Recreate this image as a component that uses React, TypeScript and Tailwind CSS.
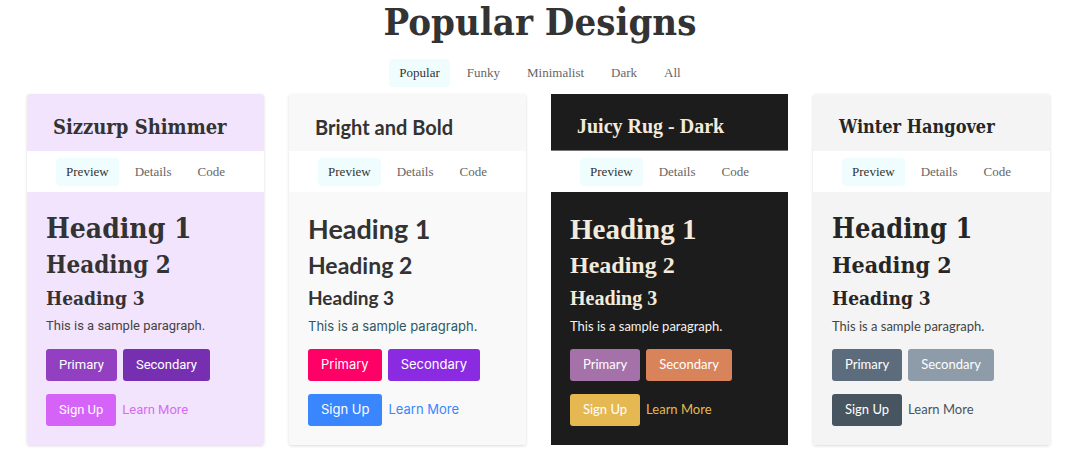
import React from "react";

type Theme = {
  name: string;
  headerBg: string;
  bodyBg: string;
  headerBorder: string;
  cardExtra: string;
  titleFont: string;
  headingFont: string;
  bodyFont: string;
  titleColor: string;
  headingColor: string;
  paraColor: string;
  primary: string;
  secondary: string;
  signUp: string;
  link: string;
  titleSize: string;
  h1: string;
  h2: string;
  h3: string;
};

const slab = "font-['DejaVu_Serif_Condensed','DejaVu_Serif',serif]";

const themes: Theme[] = [
  {
    name: "Sizzurp Shimmer",
    headerBg: "bg-[#f3e4fd]",
    bodyBg: "bg-[#f3e4fd]",
    headerBorder: "",
    cardExtra: "rounded-[3px] shadow-[0_1px_3px_rgba(0,0,0,0.15)]",
    titleFont: `${slab} font-bold`,
    headingFont: `${slab} font-bold`,
    bodyFont: "font-['Roboto',sans-serif]",
    titleColor: "text-[#333]",
    headingColor: "text-[#333]",
    paraColor: "text-[#444]",
    primary: "bg-[#9240c1]",
    secondary: "bg-[#772fb2]",
    signUp: "bg-[#d663f8]",
    link: "text-[#d36df4]",
    titleSize: "text-[20px]",
    h1: "text-[28px]",
    h2: "text-[24px]",
    h3: "text-[19px]",
  },
  {
    name: "Bright and Bold",
    headerBg: "bg-[#f8f8f8]",
    bodyBg: "bg-[#f9f9f9]",
    headerBorder: "",
    cardExtra: "rounded-[3px] shadow-[0_1px_3px_rgba(0,0,0,0.15)]",
    titleFont: "font-['Lato',sans-serif] font-bold",
    headingFont: "font-['Lato',sans-serif] font-bold",
    bodyFont: "font-['Inter',sans-serif]",
    titleColor: "text-[#333]",
    headingColor: "text-[#333]",
    paraColor: "text-[#2f5866]",
    primary: "bg-[#ff0066]",
    secondary: "bg-[#8a2be2]",
    signUp: "bg-[#3a86ff]",
    link: "text-[#3a86ff]",
    titleSize: "text-[20px]",
    h1: "text-[27px]",
    h2: "text-[23px]",
    h3: "text-[19px]",
  },
  {
    name: "Juicy Rug - Dark",
    headerBg: "bg-[#1c1c1c]",
    bodyBg: "bg-[#1c1c1c]",
    headerBorder: "border-b border-[#777]",
    cardExtra: "",
    titleFont: "font-['Liberation_Serif',serif] font-bold",
    headingFont: "font-['Liberation_Serif',serif] font-bold",
    bodyFont: "font-['Lato',sans-serif]",
    titleColor: "text-[#f3eadb]",
    headingColor: "text-[#f3eadb]",
    paraColor: "text-[#f2f2f2]",
    primary: "bg-[#a472a9]",
    secondary: "bg-[#d9835b]",
    signUp: "bg-[#e6b851]",
    link: "text-[#e6b851]",
    titleSize: "text-[20px]",
    h1: "text-[29px]",
    h2: "text-[24px]",
    h3: "text-[20px]",
  },
  {
    name: "Winter Hangover",
    headerBg: "bg-[#f4f4f4]",
    bodyBg: "bg-[#f4f4f4]",
    headerBorder: "",
    cardExtra: "rounded-[3px] shadow-[0_1px_3px_rgba(0,0,0,0.15)]",
    titleFont: `${slab} font-bold`,
    headingFont: `${slab} font-bold`,
    bodyFont: "font-['Lato',sans-serif]",
    titleColor: "text-[#262626]",
    headingColor: "text-[#262626]",
    paraColor: "text-[#444]",
    primary: "bg-[#5d6c7c]",
    secondary: "bg-[#8d9ca8]",
    signUp: "bg-[#46555f]",
    link: "text-[#46555f]",
    titleSize: "text-[18px]",
    h1: "text-[27px]",
    h2: "text-[23px]",
    h3: "text-[19px]",
  },
];

const pillFont = "font-['Liberation_Serif',serif] text-[13px]";

const Pill: React.FC<{ label: string; active?: boolean }> = ({ label, active }) => (
  <button
    className={`h-7 px-2.5 rounded-[4px] ${pillFont} ${
      active ? "bg-[#effdff] text-[#333]" : "text-[#666]"
    }`}
  >
    {label}
  </button>
);

const DesignCard: React.FC<{ theme: Theme }> = ({ theme: t }) => (
  <div className={`flex flex-col overflow-hidden ${t.cardExtra}`}>
    <div className={`h-[57px] flex items-center pl-[26px] pt-[8px] ${t.headerBg} ${t.headerBorder}`}>
      <h2 className={`${t.titleFont} ${t.titleSize} ${t.titleColor}`}>{t.name}</h2>
    </div>
    <div className="h-[41px] bg-white flex items-center justify-center gap-1.5">
      <Pill label="Preview" active />
      <Pill label="Details" />
      <Pill label="Code" />
    </div>
    <div className={`flex-1 px-[19px] pt-[19px] ${t.bodyBg}`}>
      <div className={`${t.headingFont} ${t.headingColor}`}>
        <h1 className={`${t.h1} leading-[36px]`}>Heading 1</h1>
        <h2 className={`${t.h2} leading-[36px]`}>Heading 2</h2>
        <h3 className={`${t.h3} leading-[30px]`}>Heading 3</h3>
      </div>
      <p className={`${t.bodyFont} ${t.paraColor} text-[13px] leading-[26px]`}>
        This is a sample paragraph.
      </p>
      <div className={`${t.bodyFont} text-[13px] mt-[10px] flex gap-1.5`}>
        <button className={`h-8 px-[13px] rounded-[3px] text-white ${t.primary}`}>Primary</button>
        <button className={`h-8 px-[13px] rounded-[3px] text-white ${t.secondary}`}>Secondary</button>
      </div>
      <div className={`${t.bodyFont} text-[13px] mt-[13px] flex items-center gap-1.5`}>
        <button className={`h-8 px-[13px] rounded-[3px] text-white ${t.signUp}`}>Sign Up</button>
        <a className={t.link}>Learn More</a>
      </div>
    </div>
  </div>
);

export default function App() {
  return (
    <div className="w-[1080px] h-[462px] bg-white overflow-hidden">
      <h1
        className={`${slab} font-bold text-[38px] leading-[44px] text-[#333] text-center`}
      >
        Popular Designs
      </h1>
      <div className="mt-[15px] flex justify-center gap-[7px]">
        <Pill label="Popular" active />
        <Pill label="Funky" />
        <Pill label="Minimalist" />
        <Pill label="Dark" />
        <Pill label="All" />
      </div>
      <div className="mt-[7px] ml-[27px] w-[1023px] grid grid-cols-4 gap-[25px] h-[351px]">
        {themes.map((t) => (
          <DesignCard key={t.name} theme={t} />
        ))}
      </div>
    </div>
  );
}
